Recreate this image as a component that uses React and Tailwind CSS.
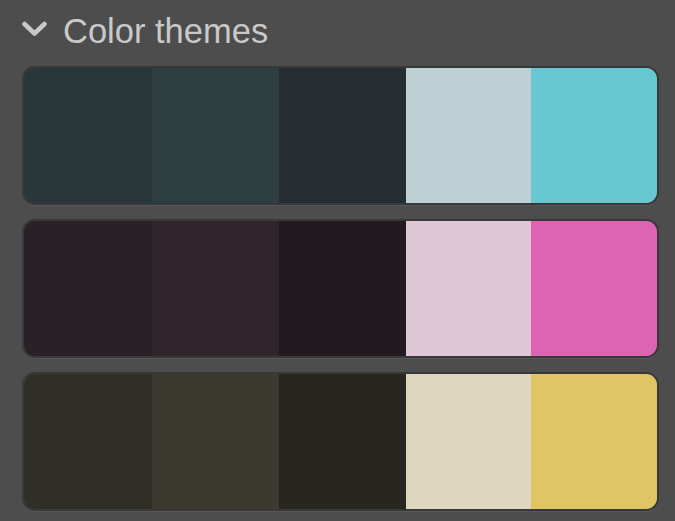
const themes = [
  ['#29363a', '#2e3f40', '#262e31', '#bdd1d4', '#67c8d1'],
  ['#2a2027', '#2f242a', '#231a20', '#dfc6d4', '#dd63b3'],
  ['#302f27', '#3c3931', '#27261f', '#ded7c0', '#dfc563'],
]

function ThemeCard({ colors }) {
  return (
    <div className="h-[139px] overflow-hidden rounded-[13px] border-2 border-[#383838] shadow-[0_1px_0_rgba(255,255,255,0.06)]">
      <div className="grid h-full grid-cols-[128px_127px_127px_125px_1fr]">
        {colors.map((c) => (
          <div key={c} style={{ backgroundColor: c }} />
        ))}
      </div>
    </div>
  )
}

export default function App() {
  return (
    <div className="h-[521px] w-[675px] overflow-hidden bg-[#4d4d4d] pl-[22px] pr-[16px] pt-[14px] font-['Liberation_Sans',Arial,sans-serif]">
      <div className="flex h-[34px] items-center gap-[16px]">
        <svg width="25" height="16" viewBox="0 0 25 16" className="mt-[-4px]">
          <path d="M2.5 3 L12.5 12.5 L22.5 3" fill="none" stroke="#c9c9c9" strokeWidth="4.5" strokeLinecap="round" strokeLinejoin="round" />
        </svg>
        <span className="text-[34.5px] leading-[34px] text-[#c9c9c9]">Color themes</span>
      </div>
      <div className="mt-[18px] flex flex-col gap-[14px]">
        {themes.map((t, i) => (
          <ThemeCard key={i} colors={t} />
        ))}
      </div>
    </div>
  )
}
